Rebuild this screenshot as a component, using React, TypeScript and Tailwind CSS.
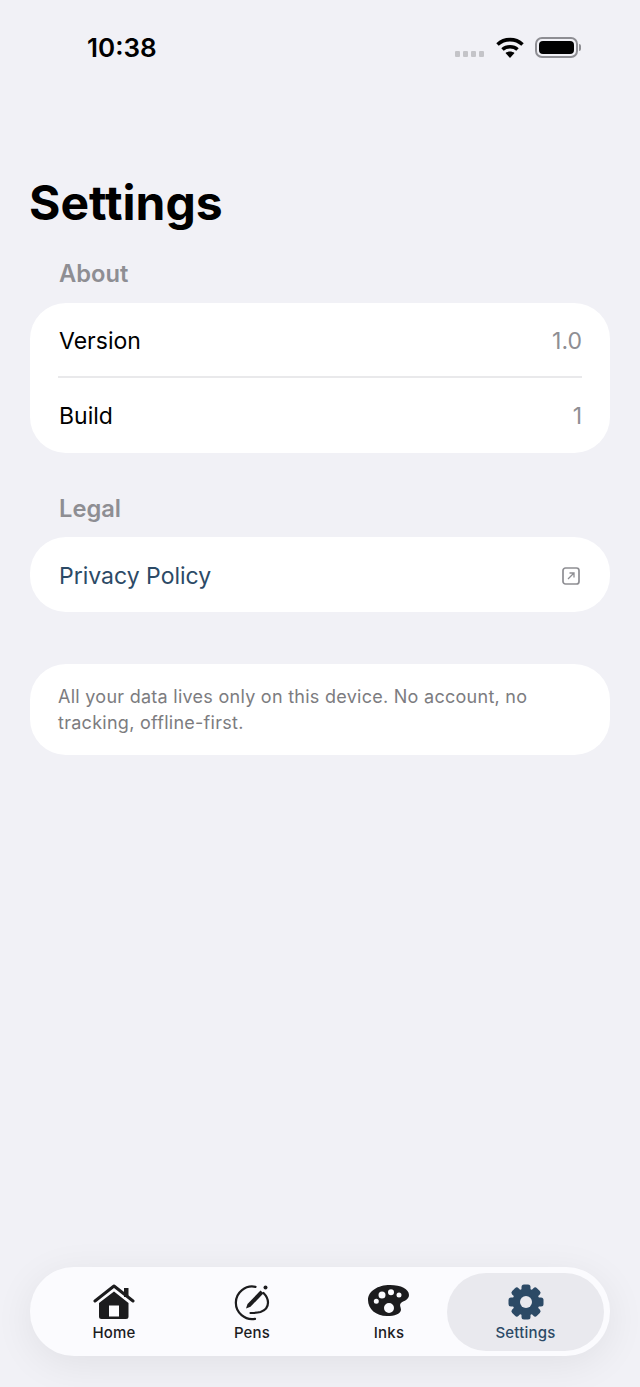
import React from "react";

const HomeIcon = () => (
  <svg width="42" height="38" viewBox="0 0 42 38" fill="none">
    <path d="M31 4h4.500V13H31z" fill="#1c1c1e" />
    <path d="M2 17 21 2l19 15" stroke="#1c1c1e" strokeWidth="3" strokeLinecap="round" strokeLinejoin="round" />
    <path
      fillRule="evenodd"
      d="M21 7.500 35.500 19V32.500a2.500 2.500 0 0 1-2.500 2.500H8.500A2.500 2.500 0 0 1 6 32.500V19L21 7.500ZM16 21.500v11h10v-11H16Z"
      fill="#1c1c1e"
    />
  </svg>
);

const PensIcon = () => (
  <svg width="38" height="38" viewBox="0 0 38 38" fill="none">
    <path
      d="M22.500 2.800A16.300 16.300 0 1 0 22 34.800M30.500 9C33.500 12 35 15 35 18.500c0 5-3 8-7.500 9.500-3.500 1-7 1-10 1"
      stroke="#1c1c1e"
      strokeWidth="2.200"
      strokeLinecap="round"
    />
    <path d="M13 24.500 14.500 20 27.500 6.500l3 2.800-13 13.500L13 24.500Z" fill="#1c1c1e" />
    <circle cx="32.500" cy="3.500" r="2" fill="#1c1c1e" />
  </svg>
);

const PaletteIcon = () => (
  <svg width="42" height="38" viewBox="0 0 42 38">
    <path
      fillRule="evenodd"
      fill="#1c1c1e"
      d="M22 1C33 1 41 5 41 11C41 16 35 17 33 19C31 21 33 23 33 26C32 30 27 32 19 32C8 32 0 25 0 16C0 7 10 1 22 1ZM14 7.500a3.500 3.500 0 1 0 0 7 3.500 3.500 0 0 0 0-7ZM23 5.300a3 3 0 1 0 0 6 3 3 0 0 0 0-6ZM31 8.500a2.500 2.500 0 1 0 0 5 2.500 2.500 0 0 0 0-5ZM8.300 14.800a2.500 2.500 0 1 0 0 5 2.500 2.500 0 0 0 0-5ZM21 19a5 5 0 1 0 0 10 5 5 0 0 0 0-10Z"
    />
  </svg>
);

const GearIcon = () => (
  <svg width="38" height="38" viewBox="-19 -18 38 38">
    <circle r="13.500" fill="#2c4a66" />
    {[0, 45, 90, 135, 180, 225, 270, 315].map((deg) => (
      <rect key={deg} x="-4.500" y="-17.500" width="9" height="10" rx="2.500" fill="#2c4a66" transform={`rotate(${deg})`} />
    ))}
    <circle r="6" fill="#e9e9ee" />
  </svg>
);

const ExternalIcon = () => (
  <svg className="mt-[2px]" width="18" height="18" viewBox="0 0 18 18" fill="none" stroke="#8e8e93">
    <rect x="1" y="1" width="16" height="16" rx="2.500" strokeWidth="1.700" />
    <path d="M6 12l6-6M7.500 6H12v4.500" strokeWidth="1.300" />
  </svg>
);

const WifiIcon = () => (
  <svg width="28" height="21" viewBox="0 0 28 21" fill="none" stroke="#000" strokeWidth="3.600">
    <path d="M1.500 7.500C8.500 1 19.500 1 26.500 7.500" />
    <path d="M6.500 12.500c4-3.600 11-3.600 15 0" />
    <path d="M14 21l-4.500-5c2.500-2 6.500-2 9 0L14 21Z" fill="#000" stroke="none" />
  </svg>
);

const BatteryIcon = () => (
  <div className="flex items-center">
    <div className="h-[21px] w-[43px] rounded-[7px] border-2 border-[#8e8e93] p-[2px]">
      <div className="h-full w-full rounded-[4px] bg-black" />
    </div>
    <div className="ml-[1px] h-[7px] w-[2px] rounded-r-sm bg-[#8e8e93]" />
  </div>
);

const Row = ({ label, value, divider }: { label: string; value: string; divider?: boolean }) => (
  <div className={`mx-[28px] flex h-[75px] items-center justify-between pl-px ${divider ? "border-b-2 border-[#e9e9eb] pt-[4px]" : "pt-[2px]"}`}>
    <span className="text-[23px] text-black">{label}</span>
    <span className="text-[23px] text-[#8e8e93]">{value}</span>
  </div>
);

const tabs = [
  { label: "Home", icon: <HomeIcon />, width: "w-[138px]" },
  { label: "Pens", icon: <PensIcon />, width: "w-[138px]" },
  { label: "Inks", icon: <PaletteIcon />, width: "ml-[10px] w-[116px]" },
];

export default function App() {
  return (
    <div className="flex h-[1387px] w-[640px] flex-col overflow-hidden bg-[#f1f1f6] font-['Inter',sans-serif]">
      {/* Status bar */}
      <div className="flex h-[94px] items-center justify-between pl-[87px] pr-[59px]">
        <span className="text-[26px] font-semibold text-black">10:38</span>
        <div className="flex items-center">
          <div className="mr-[12px] mt-[14px] flex gap-[2.500px]">
            {[0, 1, 2, 3].map((i) => (
              <span key={i} className="h-[5.500px] w-[5.500px] rounded-[1px] bg-[#c4c4c8]" />
            ))}
          </div>
          <WifiIcon />
          <div className="ml-[11px]">
            <BatteryIcon />
          </div>
        </div>
      </div>

      <div className="px-[30px]">
        <h1 className="-ml-px mt-[77px] text-[48px] font-bold leading-[64px] text-black">Settings</h1>

        <h2 className="ml-[29px] mt-[21px] text-[23.700px] font-semibold leading-[36px] text-[#8e8e93]">About</h2>
        <div className="mt-[11px] rounded-[36px] bg-white">
          <Row label="Version" value="1.0" divider />
          <Row label="Build" value="1" />
        </div>

        <h2 className="ml-[29px] mt-[38px] text-[23.700px] font-semibold leading-[36px] text-[#8e8e93]">Legal</h2>
        <div className="mt-[10px] flex h-[75px] items-center justify-between rounded-[36px] bg-white pl-[29px] pr-[30px]">
          <span className="pt-[4px] text-[23px] text-[#2c4a66]">Privacy Policy</span>
          <ExternalIcon />
        </div>

        <div className="mt-[52px] rounded-[36px] bg-white pb-[19px] pl-[28px] pr-[29px] pt-[20px]">
          <p className="text-[18px] leading-[26px] tracking-[0.27px] text-[#7c7c80]">
            All your data lives only on this device. No account, no tracking, offline-first.
          </p>
        </div>
      </div>

      {/* Tab bar */}
      <div className="mx-[30px] mb-[31px] mt-auto flex h-[89px] items-center rounded-[44px] bg-[#fbfbfe] pl-[15px] pr-[6px] shadow-[0_8px_40px_rgba(0,0,0,0.07)]">
        {tabs.map((tab) => (
          <div key={tab.label} className={`flex ${tab.width} flex-col items-center pt-[3px]`}>
            <div className="flex h-[38px] items-center justify-center">{tab.icon}</div>
            <span className="mt-[1px] text-[15px] font-medium leading-[20px] tracking-[0.2px] text-[#1c1c1e]">{tab.label}</span>
          </div>
        ))}
        <div className="flex h-[78px] flex-1 flex-col items-center justify-center rounded-[39px] bg-[#e9e9ee] pt-[3px]">
          <div className="flex h-[38px] items-center justify-center">
            <GearIcon />
          </div>
          <span className="mt-[1px] text-[15px] font-medium leading-[20px] tracking-[0.2px] text-[#2c4a66]">Settings</span>
        </div>
      </div>
    </div>
  );
}
